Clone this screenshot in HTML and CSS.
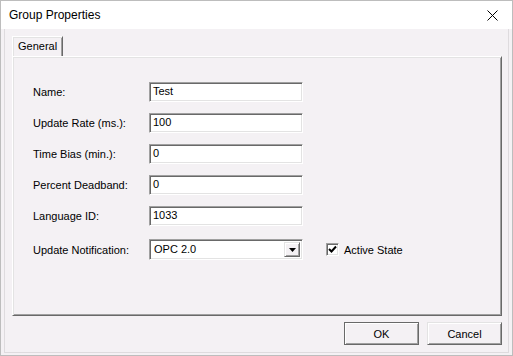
FILE: index.html
```html
<!DOCTYPE html>
<html>
<head>
<meta charset="utf-8">
<link rel="stylesheet" href="styles.css">
</head>
<body>
<div class="window">
  <div class="titlebar">
    <span class="title">Group Properties</span>
    <svg class="close" width="11" height="11" viewBox="0 0 11 11"><path d="M0.5 0.5 L10.5 10.5 M10.5 0.5 L0.5 10.5" stroke="#000" stroke-width="1" fill="none"/></svg>
  </div>
  <div class="client">
    <div class="tabs">
      <div class="tab">General</div>
    </div>
    <div class="panel">
      <div class="row"><span class="label">Name:</span><span class="field">Test</span></div>
      <div class="row"><span class="label">Update Rate (ms.):</span><span class="field">100</span></div>
      <div class="row"><span class="label">Time Bias (min.):</span><span class="field">0</span></div>
      <div class="row"><span class="label">Percent Deadband:</span><span class="field">0</span></div>
      <div class="row"><span class="label">Language ID:</span><span class="field">1033</span></div>
      <div class="row row-last">
        <span class="label">Update Notification:</span>
        <span class="combo"><span class="combo-text">OPC 2.0</span><span class="combo-btn"><svg width="7" height="4" viewBox="0 0 7 4"><path d="M0 0 H7 L3.5 4 Z" fill="#000"/></svg></span></span>
        <span class="check"><span class="box"><svg width="9" height="9" viewBox="0 0 9 9"><path d="M1 4 L3.5 6.5 L8 1.5" stroke="#000" stroke-width="2" fill="none"/></svg></span><span class="check-label">Active State</span></span>
      </div>
    </div>
    <div class="buttons">
      <span class="btn btn-default">OK</span>
      <span class="btn">Cancel</span>
    </div>
  </div>
</div>
</body>
</html>
```

FILE: styles.css
```css
html, body {
  margin: 0;
  padding: 0;
  background: #f4f1f4;
}
.window {
  width: 513px;
  height: 356px;
  box-sizing: border-box;
  border: 1px solid #bdbdbd;
  display: flex;
  flex-direction: column;
  font-family: "Liberation Sans", Arial, sans-serif;
  font-size: 11px;
  color: #000;
  background: #f4f1f4;
}
.titlebar {
  height: 28px;
  background: #fff;
  display: flex;
  align-items: center;
  justify-content: space-between;
  padding: 0 14px 0 8px;
  flex: none;
}
.title {
  font-family: "Liberation Sans", Arial, sans-serif;
  font-size: 12px;
  padding-bottom: 1px;
}
.close {
  display: block;
}
.client {
  flex: 1;
  background: #f4f1f4;
  margin: 0 3px 2px 3px;
  border-left: 1px solid #dedbde;
  border-right: 1px solid #dedbde;
  border-bottom: 1px solid #dedbde;
  padding: 7px 6px 0 7px;
  display: flex;
  flex-direction: column;
}
.tabs {
  display: flex;
  height: 20px;
}
.tab {
  width: 51px;
  height: 20px;
  box-sizing: border-box;
  border-top: 1px solid #fff;
  border-left: 1px solid #fff;
  border-right: 1px solid #696969;
  box-shadow: inset 1px 1px 0 #e3e3e3, inset -1px 0 0 #a0a0a0;
  padding: 3px 0 0 5px;
  margin-bottom: -1px;
  position: relative;
  background: #f4f1f4;
  z-index: 1;
}
.panel {
  height: 260px;
  box-sizing: border-box;
  border-top: 1px solid #fff;
  border-left: 1px solid #fff;
  border-right: 1px solid #696969;
  border-bottom: 1px solid #696969;
  box-shadow: inset 1px 1px 0 #e3e3e3, inset -1px -1px 0 #a0a0a0;
  padding: 25px 0 0 20px;
  display: flex;
  flex-direction: column;
  gap: 11px;
}
.row {
  display: flex;
  align-items: center;
  height: 20px;
}
.row-last {
  margin-top: 2px;
  height: 21px;
}
.label {
  width: 116px;
  flex: none;
}
.field, .combo {
  width: 154px;
  height: 20px;
  box-sizing: border-box;
  background: #fff;
  border-top: 1px solid #a0a0a0;
  border-left: 1px solid #a0a0a0;
  border-right: 1px solid #fff;
  border-bottom: 1px solid #fff;
  box-shadow: inset 1px 1px 0 #696969, inset -1px -1px 0 #e3e3e3;
  padding: 2px 0 0 3px;
  flex: none;
}
.combo {
  height: 21px;
  display: flex;
  padding: 2px 2px 2px 4px;
  align-items: stretch;
}
.combo-text {
  flex: 1;
  padding-top: 1px;
}
.combo-btn {
  width: 16px;
  box-sizing: border-box;
  background: #f4f1f4;
  border-top: 1px solid #e3e3e3;
  border-left: 1px solid #e3e3e3;
  border-right: 1px solid #696969;
  border-bottom: 1px solid #696969;
  box-shadow: inset 1px 1px 0 #fff, inset -1px -1px 0 #a0a0a0;
  display: flex;
  align-items: center;
  justify-content: center;
}
.combo-btn svg {
  display: block;
  margin-top: 1px;
}
.check {
  display: flex;
  align-items: center;
  margin-left: 23px;
  gap: 5px;
}
.box {
  width: 13px;
  height: 13px;
  box-sizing: border-box;
  background: #fff;
  border-top: 1px solid #a0a0a0;
  border-left: 1px solid #a0a0a0;
  border-right: 1px solid #fff;
  border-bottom: 1px solid #fff;
  box-shadow: inset 1px 1px 0 #696969, inset -1px -1px 0 #e3e3e3;
  display: flex;
  align-items: center;
  justify-content: center;
}
.box svg {
  display: block;
}
.buttons {
  display: flex;
  justify-content: flex-end;
  gap: 8px;
  margin-top: 6px;
}
.btn {
  width: 75px;
  height: 23px;
  box-sizing: border-box;
  border-top: 1px solid #e3e3e3;
  border-left: 1px solid #e3e3e3;
  border-right: 1px solid #696969;
  border-bottom: 1px solid #696969;
  box-shadow: inset 1px 1px 0 #fff, inset -1px -1px 0 #a0a0a0;
  display: flex;
  align-items: center;
  justify-content: center;
  background: #f4f1f4;
}
.btn-default {
  border: 1px solid #696969;
  box-shadow: inset 1px 1px 0 #fff, inset -1px -1px 0 #a0a0a0;
}
```
